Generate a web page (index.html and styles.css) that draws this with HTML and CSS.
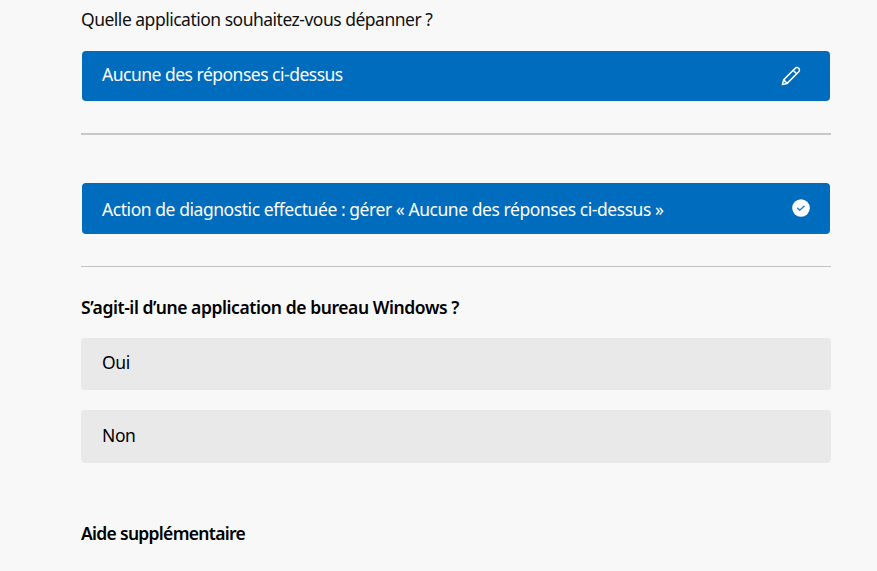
FILE: index.html
```html
<!DOCTYPE html>
<html lang="fr">

<head>
    <meta charset="UTF-8">
    <meta name="viewport" content="width=device-width, initial-scale=1.0">
    <title>Dépannage des applications</title>
    <link rel="stylesheet" href="styles.css">
</head>

<body>
    <main class="container">
        <p class="question">Quelle application souhaitez-vous dépanner ?</p>
        <button class="answer">
            <span>Aucune des réponses ci-dessus</span>
            <svg class="icon-edit" width="20" height="20" viewBox="0 0 20 20" fill="none" stroke="#fff" stroke-width="1.5" stroke-linejoin="round">
                <path d="M1.4 18.6l1.2-4.7L14.2 2.3a2.4 2.4 0 0 1 3.5 3.5L6.1 17.4z" />
                <path d="M12.2 4.3l3.5 3.5M2.6 13.9l3.5 3.5" />
            </svg>
        </button>

        <hr class="thick">

        <div class="answer result">
            <span>Action de diagnostic effectuée : gérer « Aucune des réponses ci-dessus »</span>
            <svg class="icon-check" width="18" height="18" viewBox="0 0 18 18" fill="none">
                <circle cx="9" cy="9" r="8.8" fill="#fff" />
                <path d="M5.2 8.9l2.5 2.3 4.9-4.4" stroke="#2f84cb" stroke-width="1.5" />
            </svg>
        </div>

        <hr>

        <h2>S’agit-il d’une application de bureau Windows ?</h2>
        <div class="options">
            <button class="option">Oui</button>
            <button class="option">Non</button>
        </div>

        <h2 class="help">Aide supplémentaire</h2>
    </main>
</body>

</html>
```
FILE: styles.css
```css
* {
    box-sizing: border-box;
}

body {
    margin: 0;
    background-color: #f8f8f8;
    color: #111;
    font-family: "Segoe UI", "Noto Sans", "Open Sans", sans-serif;
    font-size: 17.5px;
    line-height: 24px;
    white-space: nowrap;
}

.container {
    width: 750px;
    margin-left: 81px;
    padding-top: 7px;
}

button {
    border: 0;
    font: inherit;
    text-align: left;
    cursor: pointer;
}

.question {
    margin: 0 0 20px;
    letter-spacing: -0.5px;
}

.answer {
    display: flex;
    justify-content: space-between;
    width: 748px;
    height: 50px;
    margin: 0 1px;
    padding: 11px 29px 0 20px;
    border-radius: 4px;
    background-color: #006cbe;
    color: #fff;
    letter-spacing: -0.5px;
}

.icon-edit {
    margin-top: 4px;
}

.result {
    height: 51px;
    padding: 14px 20px 0;
    letter-spacing: -0.44px;
}

.icon-check {
    margin-top: 2px;
}

hr {
    height: 1px;
    margin: 32px 0 28px;
    border: 0;
    background-color: #c2c2c2;
}

.thick {
    height: 2px;
    margin-bottom: 48px;
    background-color: #c8c8c8;
}

h2 {
    margin: 0 0 19px;
    color: #000;
    font-size: 17.5px;
    font-weight: 600;
    letter-spacing: -0.42px;
}

.options {
    display: grid;
    grid-template-rows: 52px 53px;
    gap: 20px;
}

.option {
    padding: 0 21px 4px;
    border-radius: 4px;
    background-color: #e9e9e9;
    color: #000;
    letter-spacing: -0.4px;
}

.help {
    margin: 58px 0 0;
    letter-spacing: -0.7px;
}
```
